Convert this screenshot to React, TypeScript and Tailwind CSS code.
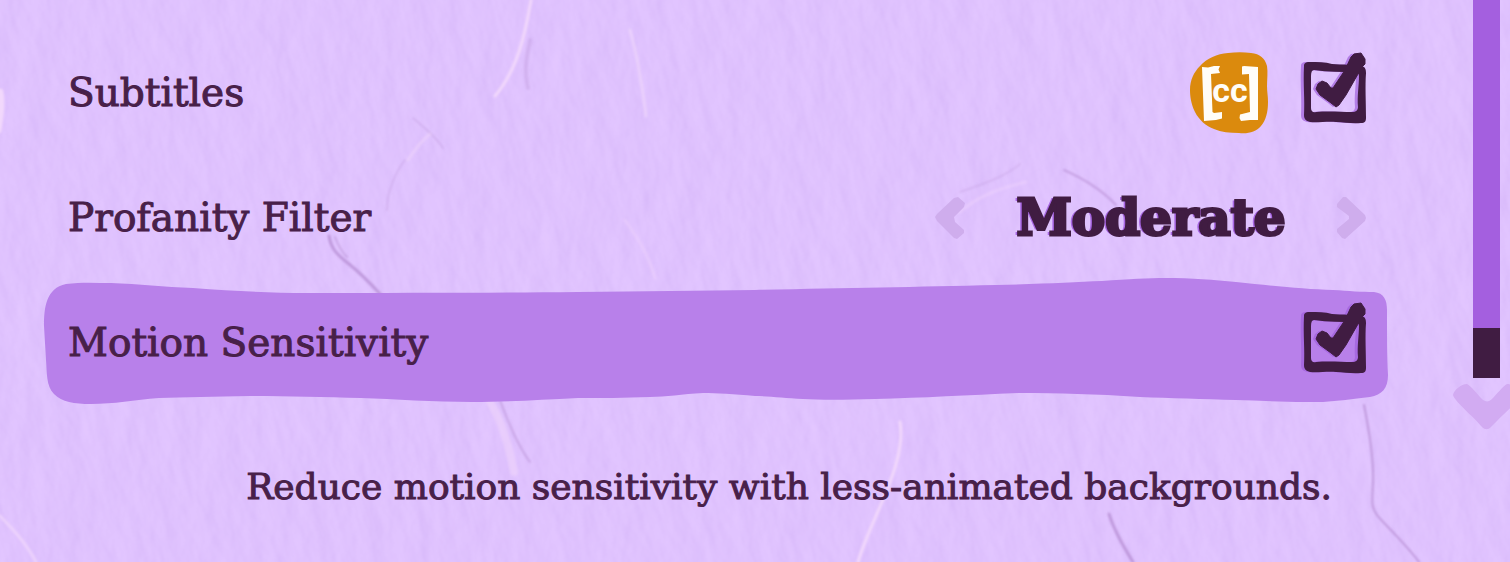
import { useState } from 'react';

const filterLevels = ['None', 'Moderate', 'Strict'];

function PaperBackground() {
  return (
    <svg
      className="absolute inset-0 w-full h-full"
      viewBox="0 0 1510 562"
      preserveAspectRatio="none"
      aria-hidden="true"
    >
      <defs>
        <filter id="paper" x="0" y="0" width="100%" height="100%" colorInterpolationFilters="sRGB">
          <feTurbulence type="fractalNoise" baseFrequency="0.04 0.018" numOctaves="4" seed="11" result="noise" />
          <feColorMatrix in="noise" type="matrix" values="0 0 0 0 0  0 0 0 0 0  0 0 0 0 0  1 0 0 0 0" />
          <feDiffuseLighting surfaceScale="2" diffuseConstant="1" lightingColor="#ffffff">
            <feDistantLight azimuth="200" elevation="60" />
          </feDiffuseLighting>
          <feComponentTransfer>
            <feFuncR type="linear" slope="0.15" intercept="0.748" />
            <feFuncG type="linear" slope="0.18" intercept="0.607" />
            <feFuncB type="linear" slope="0.08" intercept="0.928" />
          </feComponentTransfer>
          <feGaussianBlur stdDeviation="1" />
        </filter>
        <filter id="soften" x="-5%" y="-5%" width="110%" height="110%">
          <feGaussianBlur stdDeviation="1.2" />
        </filter>
      </defs>
      <g transform="rotate(-14 755 281)">
        <rect x="-100" y="-300" width="1710" height="1160" filter="url(#paper)" />
      </g>

      {/* Creases */}
      <g fill="none" strokeLinecap="round" filter="url(#soften)">
        <g stroke="#b48bd0" strokeOpacity="0.75" strokeWidth="2">
          <path d="M329 236c2 14 10 20 20 28s22 20 32 31" strokeWidth="3" />
          <path d="M335 237c4 10 8 16 12 20" strokeOpacity="0.5" />
          <path d="M1064 170c18 8 38 20 52 35" strokeOpacity="0.6" />
          <path d="M1109 514c5 16 14 32 24 48" strokeWidth="3" />
          <path d="M1364 405c6 30 10 58 9 78s-2 24 4 32 28 28 42 47" />
          <path d="M500 400c8 22 18 46 30 62" strokeOpacity="0.5" />
          <path d="M530 40c-4 20-6 30-2 48" strokeOpacity="0.3" strokeWidth="4" />
          <path d="M387 210c0-20 10-40 18-50" strokeOpacity="0.3" />
          <path d="M413 118c12 10 24 20 30 30" strokeOpacity="0.3" />
          <path d="M960 192c24-8 46-16 60-28" strokeOpacity="0.25" />
        </g>
        <g stroke="#f2d8fc" strokeWidth="3">
          <path d="M531 0c-6 36-14 70-36 96" />
          <path d="M630 30c8 28 12 54 16 86" strokeOpacity="0.6" />
          <path d="M900 422c4 24-6 52-18 80s-18 40-24 60" />
          <path d="M490 402c12 20 18 40 24 70" strokeWidth="8" strokeOpacity="0.5" />
          <path d="M0 92c2 14 0 24-2 38" strokeWidth="7" />
          <path d="M960 212c18-16 40-24 66-30" strokeOpacity="0.4" />
          <path d="M408 160c8-12 14-20 22-26" strokeOpacity="0.5" />
          <path d="M0 516c16 16 28 30 36 46" strokeOpacity="0.7" />
          <path d="M625 220c14 20 24 36 30 58" strokeOpacity="0.4" />
        </g>
      </g>
    </svg>
  );
}

function RowHighlight() {
  return (
    <svg
      className="absolute inset-0 w-full h-full overflow-visible"
      viewBox="0 0 1344 125"
      preserveAspectRatio="none"
      aria-hidden="true"
    >
      <path
        fill="#b880ea"
        d="M0 46C0 28 2 8 22 4C38 2 52 3 67 3C95 4 120 7 149 8C190 11 225 13 264 13C360 13 440 13 534 12C600 11 655 11 711 10C800 8 870 7 952 5C1000 4 1030 2 1058 1C1085-1 1105-2 1121-2C1148-2 1170 0 1192 2C1230 6 1260 9 1289 10C1305 11 1318 12 1330 12C1340 13 1343 20 1343 30C1343 52 1343 76 1344 95C1344 108 1338 115 1326 117C1308 119 1294 121 1279 122C1250 122 1220 121 1192 120C1160 119 1125 118 1096 117C1050 114 1015 113 976 113C925 115 880 118 831 119C800 120 775 120 759 119C740 118 725 116 711 116C690 114 672 113 659 113C638 114 622 117 606 117C580 118 558 118 534 118C495 120 460 122 428 122C390 122 350 119 317 118C280 117 240 116 206 116C170 117 140 117 115 118C90 120 70 124 47 124C30 124 18 122 10 114C2 106 3 92 2 80Z"
      />
    </svg>
  );
}

function CaptionsIcon() {
  return (
    <svg width="78" height="82" viewBox="0 0 78 82" aria-hidden="true">
      <path
        fill="#db8a0d"
        d="M0 38C0 28 4 20 10 14C17 6 27 2 38 1C46 0 54 0 61 1C70 2 75 6 77 14C78 20 77 28 77 34C77 40 78 44 78 50C78 60 76 68 71 74C66 80 58 82 49 81C40 81 31 80 24 77C16 74 9 68 5 60C1 52 0 44 0 38Z"
      />
      <path
        fill="#fffdf8"
        d="M12 15L18 15.500L24 14H30L28.500 17.500L30 21L21 22L22.500 60L24 61L32 60V66.500L26 68L14 69Z M52 14.500L54 14L68 15V68L60 68L51 69L49.500 66L50 62.500L60 60L59 22L52 22.500Z"
      />
      <text
        x="40"
        y="50"
        textAnchor="middle"
        fill="#fffdf8"
        fontFamily="Roboto, 'Liberation Sans', sans-serif"
        fontWeight="700"
        fontSize="34"
      >
        cc
      </text>
    </svg>
  );
}

function CheckMark({ checked }: { checked: boolean }) {
  const box =
    'M4 14C4 11 6 10 9 10C18 10 25 10 32 12C42 13 54 12 62 14C65 15 66 17 66 21C65 34 66 50 66 66C66 69 65 71 61 71C52 72 44 70 36 70C27 69 18 71 10 70C6 69 4 67 4 63C5 48 3 32 4 14ZM14 18C12 18 11 20 11 24L11 56C11 59 13 61 16 60C28 59 42 60 52 60C56 60 58 58 58 55C57 44 59 34 59 24C59 21 57 20 54 20C42 20 28 20 14 18Z';
  const tick =
    'M16 37L18 32L22 29L27 31L31 36L33 36L45 18L51 5L54 2L61 1L65 7L65 12L61 16L58 22L46 43L39 53L36 55L31 51L20 43Z';
  return (
    <svg width="68" height="82" viewBox="0 0 68 82" fillRule="evenodd" strokeLinejoin="round" aria-hidden="true">
      <g fill="#a05fdc" fillOpacity="0.7" transform="translate(-3 0)">
        <path d={box} />
        {checked && <path d={tick} />}
      </g>
      <g fill="#401c42">
        <path d={box} />
        {checked && <path d={tick} stroke="#401c42" strokeWidth="1" />}
      </g>
    </svg>
  );
}

interface ToggleRowProps {
  id: string;
  label: string;
  active?: boolean;
  icon?: React.ReactNode;
}

function ToggleRow({ id, label, active, icon }: ToggleRowProps) {
  const [checked, setChecked] = useState(true);

  return (
    <div className="relative h-[125px]">
      {active && <RowHighlight />}
      <div className="relative h-full pl-6 pr-5 flex items-center justify-between">
        <label htmlFor={id}>{label}</label>
        <div className="flex items-center gap-8">
          {icon}
          <div className="relative">
            <CheckMark checked={checked} />
            <input
              id={id}
              type="checkbox"
              checked={checked}
              onChange={(e) => setChecked(e.target.checked)}
              className="absolute inset-0 w-full h-full opacity-0 cursor-pointer"
            />
          </div>
        </div>
      </div>
    </div>
  );
}

export default function App() {
  const [level, setLevel] = useState(1);

  return (
    <div className="relative min-h-screen overflow-hidden bg-[#dfc3ff] text-[#482049] font-['DejaVu_Serif',serif] text-[39px] leading-[48px] [-webkit-text-stroke:1px_#482049]">
      <PaperBackground />

      <div className="relative flex">
        <main className="flex-1 min-w-0 pl-11 pr-[65px] pt-[30px]">
          <ToggleRow id="subtitles" label="Subtitles" icon={<CaptionsIcon />} />

          <div className="h-[125px] pl-6 pr-5 flex items-center justify-between">
            <span id="profanity-label">Profanity Filter</span>
            <div className="flex items-center gap-10" role="group" aria-labelledby="profanity-label">
              <button aria-label="Previous" onClick={() => setLevel(Math.max(0, level - 1))}>
                <svg width="32" height="44" viewBox="0 0 32 44" aria-hidden="true">
                  <path fill="#cfaded" d="M20 2L24 1L31 7L30 11L20 21L21 26L30 34L30 37L23 43L20 42L3 25L1 21L3 18Z" />
                </svg>
              </button>
              <output className="min-w-[290px] text-center font-bold text-[50px] text-[#401c42] [-webkit-text-stroke:3px_#401c42] [text-shadow:-3px_0_0_#a866e4]">
                {filterLevels[level]}
              </output>
              <button
                aria-label="Next"
                onClick={() => setLevel(Math.min(filterLevels.length - 1, level + 1))}
              >
                <svg width="32" height="44" viewBox="0 0 32 44" aria-hidden="true">
                  <path fill="#cfaded" d="M1 8L7 1L10 1L29 19L30 22L29 25L9 43L6 42L1 36L1 33L13 23L13 20L1 11Z" />
                </svg>
              </button>
            </div>
          </div>

          <ToggleRow id="motion" label="Motion Sensitivity" active />

          <p className="mt-[58px] pr-14 text-right text-[36px]">
            Reduce motion sensitivity with less-animated backgrounds.
          </p>
        </main>

        {/* Scrollbar */}
        <aside className="w-[57px] shrink-0 overflow-hidden">
          <div className="ml-5 w-[27px] h-[378px] bg-[#a45fdf] flex flex-col justify-end">
            <div className="h-[50px] bg-[#401c42]" />
          </div>
          <button aria-label="Scroll down" className="block w-[68px] mt-1">
            <svg width="68" height="50" viewBox="0 0 68 50" aria-hidden="true">
              <path fill="#d2abf2" d="M0 13C1 8 8 2 14 2C18 4 24 12 30 18C33 20 36 20 39 17C44 12 50 4 54 2C60 2 67 8 68 13C67 18 48 34 38 45C35 48 32 48 29 45C20 34 2 20 0 13Z" />
            </svg>
          </button>
        </aside>
      </div>
    </div>
  );
}
